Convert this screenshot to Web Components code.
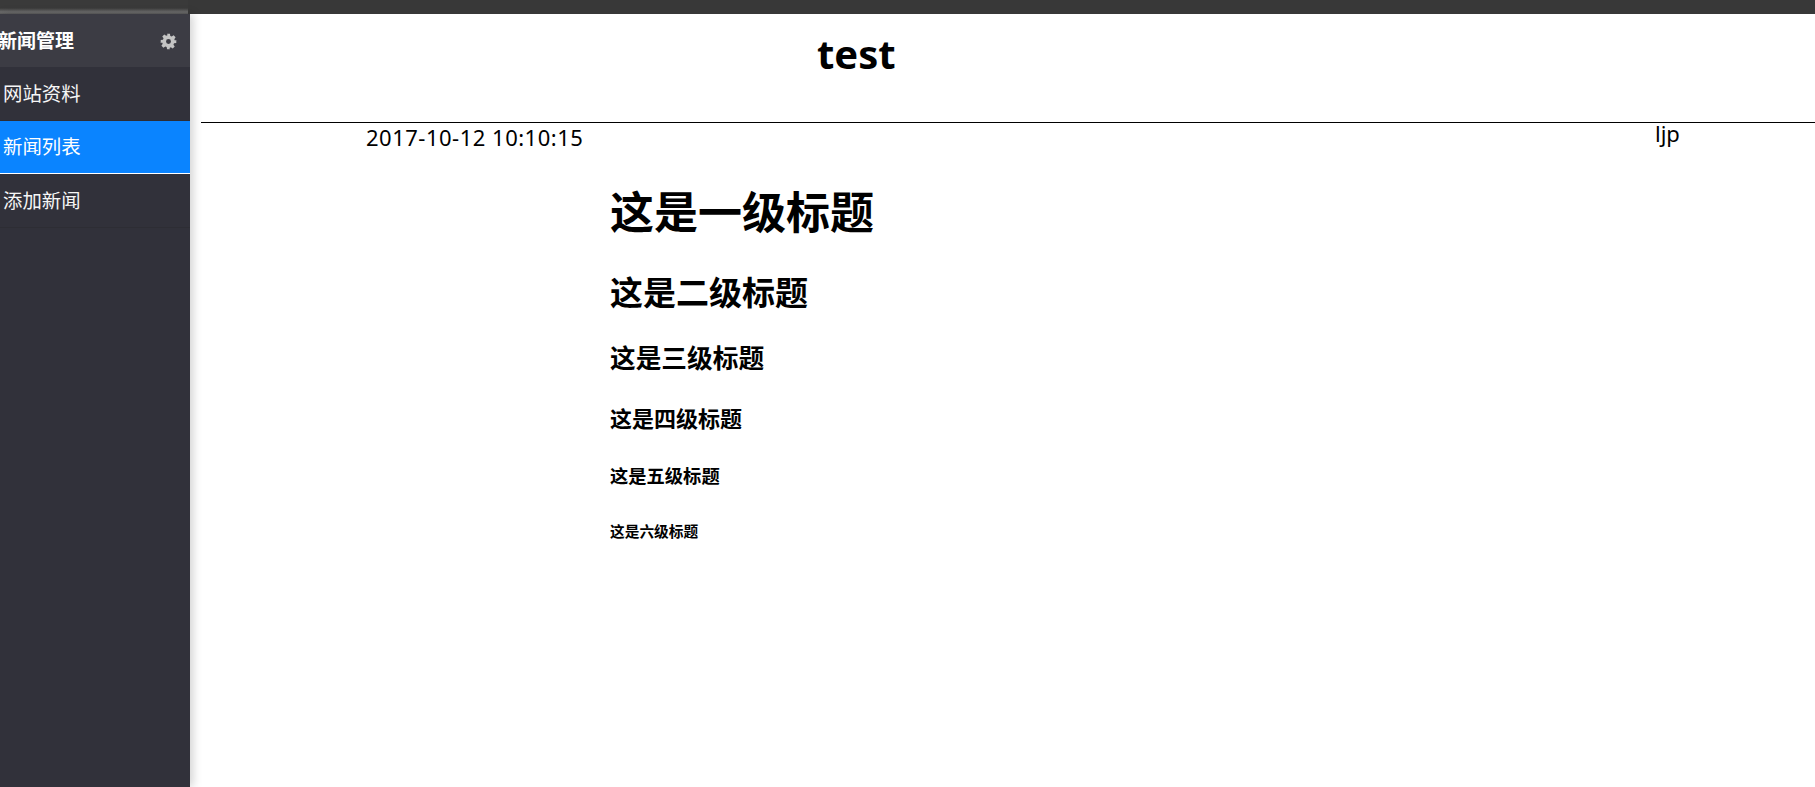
<!DOCTYPE html>
<html>
<head>
<meta charset="utf-8">
<title>新闻管理</title>
<style>
  html, body { margin: 0; height: 100%; background: #fff; overflow: hidden; }
  body { font-family: "Noto Sans", "Noto Sans CJK SC", sans-serif; }
</style>
</head>
<body>
<news-app>
  <news-sidebar slot="sidebar" title-text="新闻管理">
    <news-nav-item>网站资料</news-nav-item>
    <news-nav-item active>新闻列表</news-nav-item>
    <news-nav-item>添加新闻</news-nav-item>
  </news-sidebar>
  <news-article slot="main" heading="test" date="2017-10-12 10:10:15" author="ljp">
    <h1>这是一级标题</h1>
    <h2>这是二级标题</h2>
    <h3>这是三级标题</h3>
    <h4>这是四级标题</h4>
    <h5>这是五级标题</h5>
    <h6>这是六级标题</h6>
  </news-article>
</news-app>

<script>
'use strict';

class NewsApp extends HTMLElement {
  constructor() {
    super();
    this.attachShadow({ mode: 'open' }).innerHTML = `
      <style>
        :host {
          display: grid;
          grid-template-columns: 190px 1fr;
          grid-template-rows: 14px 1fr;
          height: 787px;
          overflow: hidden;
        }
        .top {
          grid-column: 1 / 3;
          background:
            linear-gradient(180deg, #3a3a3a 0, #3a3a3a 8px, #6c6c6c 12px, #5a5a5a 14px) 0 0 / 188px 14px no-repeat,
            #383838;
        }
      </style>
      <div class="top"></div>
      <slot name="sidebar"></slot>
      <slot name="main"></slot>
    `;
  }
}

class NewsSidebar extends HTMLElement {
  constructor() {
    super();
    this.attachShadow({ mode: 'open' }).innerHTML = `
      <style>
        :host {
          display: block;
          position: relative;
          background: #31313a;
          box-shadow: 3px 0 9px rgba(0, 0, 0, .18);
          color: #fff;
        }
        header {
          display: flex;
          align-items: center;
          justify-content: space-between;
          height: 53px;
          padding: 0 13px 0 0;
          background: #3c3c44;
        }
        h2 {
          margin: 0 0 0 -2px;
          padding-top: 2px;
          font: 700 19px/1 "Noto Sans", "Noto Sans CJK SC", sans-serif;
        }
        svg { width: 17px; height: 17px; display: block; margin-top: 2px; }
      </style>
      <header>
        <h2></h2>
        <svg viewBox="0 0 24 24" fill="#c4c4c4"><path fill-rule="evenodd" d="M10 1h4l.6 3.2 1.9.8 2.7-1.8 2.8 2.8-1.8 2.7.8 1.9L23 10v4l-3.2.6-.8 1.9 1.8 2.7-2.8 2.8-2.7-1.8-1.9.8L14 23h-4l-.6-3.2-1.9-.8-2.7 1.8-2.8-2.8 1.8-2.7-.8-1.9L1 14v-4l3.2-.6.8-1.9-1.8-2.7 2.8-2.8 2.7 1.8 1.9-.8zM12 8.5a3.5 3.5 0 1 0 0 7 3.5 3.5 0 0 0 0-7z"/></svg>
      </header>
      <slot></slot>
    `;
  }

  connectedCallback() {
    this.shadowRoot.querySelector('h2').textContent = this.getAttribute('title-text');
  }
}

class NewsNavItem extends HTMLElement {
  constructor() {
    super();
    this.attachShadow({ mode: 'open' }).innerHTML = `
      <style>
        :host {
          display: flex;
          align-items: center;
          box-sizing: border-box;
          height: 53.5px;
          padding: 0 0 2px 3px;
          font-size: 19.4px;
          color: #f6f6f6;
          border-bottom: 1px solid #2d2d34;
        }
        :host([active]) {
          background: #0a84ff;
          border-bottom-color: #fff;
          color: #fff;
        }
      </style>
      <slot></slot>
    `;
  }
}

class NewsArticle extends HTMLElement {
  constructor() {
    super();
    this.attachShadow({ mode: 'open' }).innerHTML = `
      <style>
        :host {
          display: block;
          padding-left: 11px;
          font-size: 22px;
          color: #000;
        }
        .title {
          height: 109px;
          box-sizing: border-box;
          border-bottom: 1px solid #000;
          padding: 13px 0 0 616px;
          margin: 0;
          font-size: 40px;
          line-height: 54px;
          font-weight: 700;
        }
        .meta {
          display: grid;
          grid-template-columns: 165px 1289px auto;
          height: 29px;
          line-height: 29px;
        }
        .date { grid-column: 2; letter-spacing: .5px; }
        .author { margin-top: -4px; }
        .body { padding-left: 409px; }
        ::slotted(*) { font-weight: 700; font-family: "Noto Sans CJK SC", sans-serif; line-height: 1.3; }
        ::slotted(h1) { font-size: 44px; margin: 30px 0 0; }
        ::slotted(h2) { font-size: 33px; margin: 31px 0 0; }
        ::slotted(h3) { font-size: 25.7px; margin: 26.5px 0 0; }
        ::slotted(h4) { font-size: 22px; margin: 30px 0 0; }
        ::slotted(h5) { font-size: 18.3px; margin: 32.5px 0 0; }
        ::slotted(h6) { font-size: 14.7px; margin: 33.5px 0 0; }
      </style>
      <h1 class="title"></h1>
      <div class="meta">
        <span class="date"></span>
        <span class="author"></span>
      </div>
      <div class="body"><slot></slot></div>
    `;
  }

  connectedCallback() {
    const root = this.shadowRoot;
    root.querySelector('.title').textContent = this.getAttribute('heading');
    root.querySelector('.date').textContent = this.getAttribute('date');
    root.querySelector('.author').textContent = this.getAttribute('author');
  }
}

customElements.define('news-app', NewsApp);
customElements.define('news-sidebar', NewsSidebar);
customElements.define('news-nav-item', NewsNavItem);
customElements.define('news-article', NewsArticle);
</script>
</body>
</html>
